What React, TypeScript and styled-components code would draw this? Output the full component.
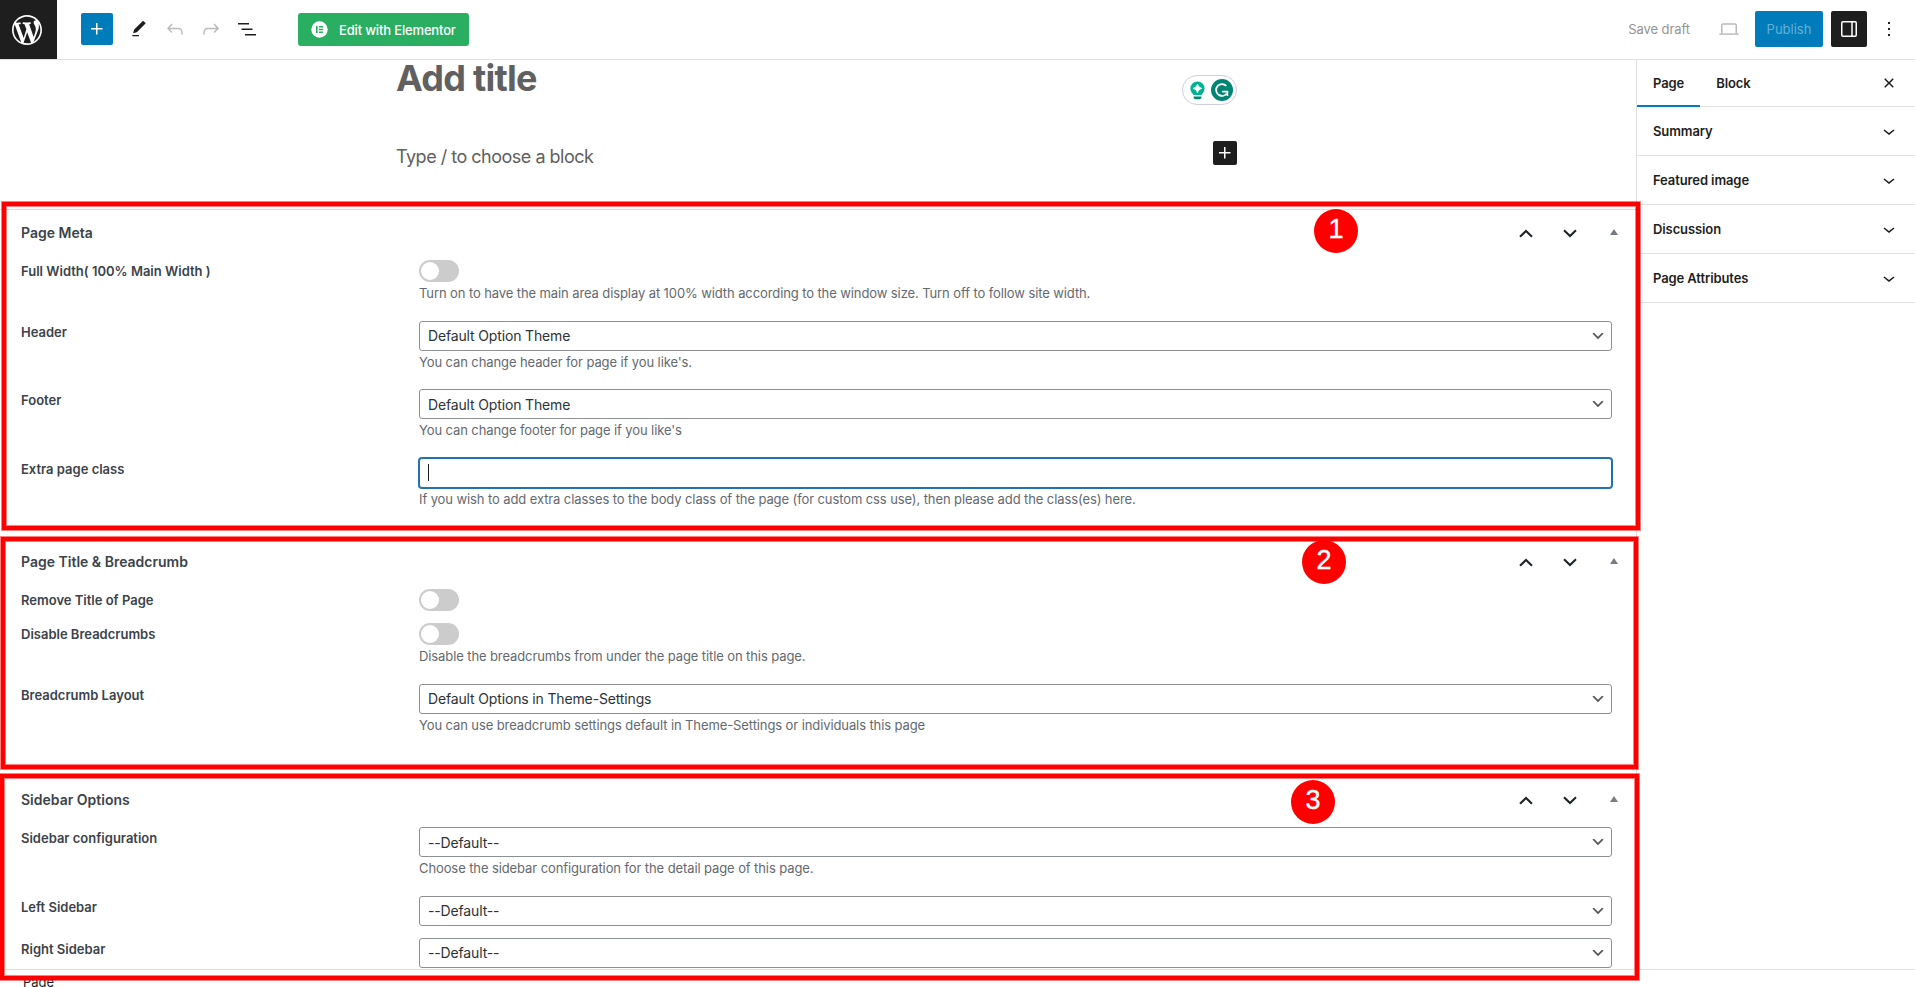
import React from "react";
import styled, { createGlobalStyle, css } from "styled-components";

const Global = createGlobalStyle`
  * { box-sizing: border-box; }
  body {
    margin: 0;
    background: #fff;
    color: #1e1e1e;
    font-family: Inter, "Liberation Sans", sans-serif;
    font-size: 13px;
    -webkit-font-smoothing: antialiased;
  }
`;

const Editor = styled.div`
  position: relative;
  display: flex;
  flex-direction: column;
  width: 1915px;
  height: 987px;
  overflow: hidden;
`;

/* ---------- top bar ---------- */

const TopBar = styled.header`
  flex: none;
  display: flex;
  align-items: center;
  height: 60px;
  border-bottom: 1px solid #e0e0e0;
`;

const SiteLogo = styled.div`
  display: flex;
  align-items: center;
  justify-content: center;
  width: 57px;
  height: 59px;
  padding: 1px 3px 0 0;
  background: #1e1e1e;
`;

const Tools = styled.div`
  display: flex;
  align-items: center;
  margin-left: 24px;
  padding-bottom: 1px;
`;

const InserterButton = styled.button`
  display: flex;
  align-items: center;
  justify-content: center;
  width: 32px;
  height: 32px;
  margin: 0 8px 0 0;
  padding: 0;
  border: 0;
  border-radius: 2px;
  background: #007cba;
  color: #fff;
`;

const ToolButton = styled.button<{ $dim?: boolean }>`
  display: flex;
  align-items: center;
  justify-content: center;
  width: 36px;
  height: 36px;
  padding: 0;
  border: 0;
  background: none;
  color: ${(p) => (p.$dim ? "#bbbbbb" : "#1e1e1e")};
`;

const ElementorButton = styled.button`
  display: flex;
  align-items: center;
  gap: 11px;
  width: 171px;
  height: 33px;
  margin: 0 0 0 33px;
  padding: 0 0 0 13px;
  border: 0;
  border-radius: 3px;
  background: #29ae62;
  color: #fff;
  font: 500 13px/33px Inter, "Liberation Sans", sans-serif;
  letter-spacing: -0.16px;
  white-space: nowrap;
`;

const ElementorLabel = styled.span`
  padding-top: 2px;
`;

const Actions = styled.div`
  display: flex;
  align-items: center;
  margin-left: auto;
  padding: 0 14px 1px 0;
`;

const SaveDraft = styled.span`
  margin-right: 29px;
  color: #949494;
  letter-spacing: -0.08px;
  white-space: nowrap;
`;

const PublishButton = styled.button`
  width: 68px;
  height: 36px;
  margin: 0 8px 0 16px;
  padding: 0;
  border: 0;
  border-radius: 2px;
  background: #007cba;
  color: #66b0d6;
  font: 400 13px/36px Inter, "Liberation Sans", sans-serif;
`;

const SettingsButton = styled.button`
  display: flex;
  align-items: center;
  justify-content: center;
  width: 36px;
  height: 36px;
  margin-right: 10px;
  padding: 0;
  border: 0;
  border-radius: 2px;
  background: #1e1e1e;
  color: #fff;
`;

/* ---------- body ---------- */

const Body = styled.div`
  flex: none;
  display: flex;
  height: 909px;
`;

const Main = styled.main`
  display: flex;
  flex-direction: column;
  width: 1636px;
`;

const Canvas = styled.section`
  flex: none;
  height: 149px;
  padding: 0 399px 0 396px;
`;

const CanvasRow = styled.div`
  display: flex;
  align-items: flex-start;
  justify-content: space-between;
  height: 66px;
  padding-top: 15px;
`;

const PageTitle = styled.h1`
  margin: -17px 0 0;
  color: #606060;
  font-size: 36px;
  font-weight: 700;
  line-height: 40px;
  letter-spacing: -0.75px;
`;

const Prompt = styled.p`
  margin: 3px 0 0;
  color: #606060;
  font-size: 18px;
  line-height: 26px;
  letter-spacing: -0.5px;
`;

const GrammarPill = styled.div`
  display: flex;
  align-items: center;
  justify-content: space-between;
  width: 55px;
  height: 30px;
  padding: 0 3px 0 7px;
  border: 1px solid #cfcfe0;
  border-radius: 15px;
`;

const BlockAdder = styled.button`
  display: flex;
  align-items: center;
  justify-content: center;
  width: 24px;
  height: 24px;
  padding: 0;
  border: 0;
  border-radius: 2px;
  background: #1e1e1e;
  color: #fff;
`;

/* ---------- meta boxes ---------- */

const MetaBoxes = styled.div`
  flex: 1;
  min-height: 0;
  overflow: hidden;
  border-top: 1px solid #ddd;
`;

const MetaBox = styled.section<{ $height: number }>`
  height: ${(p) => p.$height}px;
  padding: 0 24px 0 21px;
`;

const MetaHead = styled.div`
  display: flex;
  align-items: center;
  height: 46px;
  margin-bottom: 3.8px;
`;

const MetaTitle = styled.h2`
  flex: 1;
  margin: 0;
  color: #3c434a;
  font-size: 14px;
  font-weight: 600;
  line-height: 20px;
`;

const OrderIcons = styled.div`
  display: flex;
  align-items: center;
  margin-right: -24px;
  color: #1d2327;
`;

const IconCell = styled.span<{ $width: number }>`
  display: flex;
  justify-content: center;
  width: ${(p) => p.$width}px;
`;

const Row = styled.div`
  display: flex;
  margin-bottom: 12px;
`;

const Label = styled.label`
  flex: none;
  width: 398px;
  height: 22px;
  color: #3c434a;
  font-weight: 600;
  line-height: 23px;
`;

const Field = styled.div`
  flex: 1;
`;

const Toggle = styled.span`
  display: flex;
  width: 40px;
  height: 22px;
  padding: 2px;
  border-radius: 11px;
  background: #ccc;

  &::before {
    content: "";
    width: 18px;
    height: 18px;
    border-radius: 50%;
    background: #fff;
  }
`;

const control = css`
  display: flex;
  align-items: center;
  height: 30px;
  border-radius: 3px;
  background: #fff;
  color: #2c3338;
  font-size: 14px;
  letter-spacing: -0.15px;
`;

const Select = styled.div`
  ${control}
  justify-content: space-between;
  padding: 0 5px 0 8px;
  border: 1px solid #8c8f94;

  svg {
    color: #555;
  }
`;

const TextInput = styled.div`
  ${control}
  padding: 0 8px;
  border: 1px solid #2271b1;
  box-shadow: 0 0 0 1px #2271b1;
`;

const Caret = styled.span`
  width: 1px;
  height: 17px;
  background: #1e1e1e;
`;

const Help = styled.p<{ $toggle: boolean }>`
  margin: ${(p) => (p.$toggle ? "2.4px 0 6.6px" : "2px 0 6.5px")};
  color: #646970;
  line-height: 18px;
  letter-spacing: -0.1px;
  white-space: nowrap;
`;

/* ---------- sidebar ---------- */

const Sidebar = styled.aside`
  flex: 1;
  border-left: 1px solid #e0e0e0;
  font-weight: 600;
  letter-spacing: -0.1px;
`;

const Tabs = styled.div`
  display: flex;
  height: 47px;
  padding-right: 14px;
  border-bottom: 1px solid #e0e0e0;
`;

const Tab = styled.div<{ $active?: boolean }>`
  height: 47px;
  padding: 0 16px;
  line-height: 47px;
  ${(p) => p.$active && "box-shadow: inset 0 -2px 0 #007cba;"}
`;

const CloseButton = styled.span`
  display: flex;
  align-items: center;
  margin-left: auto;
`;

const Panel = styled.div`
  display: flex;
  align-items: center;
  justify-content: space-between;
  height: 49px;
  padding: 0 14px 0 16px;
  border-bottom: 1px solid #e0e0e0;
`;

const Footer = styled.footer`
  flex: none;
  height: 25px;
  padding-left: 23px;
  border-top: 1px solid #e0e0e0;
  line-height: 24px;
`;

/* ---------- annotations laid over the page ---------- */

const Frame = styled.div<{ $x: number; $y: number; $w: number; $h: number }>`
  position: absolute;
  left: ${(p) => p.$x}px;
  top: ${(p) => p.$y}px;
  width: ${(p) => p.$w}px;
  height: ${(p) => p.$h}px;
  border: 4px solid #f00;
  box-shadow: 0 0 0 1px rgba(255, 0, 0, 0.5), inset 0 0 0 1px rgba(255, 0, 0, 0.5);
`;

const Badge = styled.div<{ $x: number; $y: number }>`
  position: absolute;
  left: ${(p) => p.$x}px;
  top: ${(p) => p.$y}px;
  width: 44px;
  height: 44px;
  border-radius: 50%;
  background: #f00;
  color: #fff;
  font: 400 27px/40px "Liberation Sans", sans-serif;
  -webkit-text-stroke: 0.4px #fff;
  text-align: center;
`;

/* ---------- icons ---------- */

const Glyph = ({ d, size = 24, box = "0 0 24 24" }: { d: string; size?: number; box?: string }) => (
  <svg width={size} height={size} viewBox={box} fill="currentColor">
    <path d={d} />
  </svg>
);

const plus = "M11 12.5V17.5H12.5V12.5H17.5V11H12.5V6H11V11H6V12.5H11Z";
const pencil = "M20.1 5.1L16.9 2 6.2 12.7l-1.3 4.4 4.5-1.3L20.1 5.1zM4 20.8h8v-1.5H4v1.5z";
const undo =
  "M18.3 11.7c-.6-.6-1.4-.9-2.3-.9H6.7l2.9-3.3-1.1-1-4.5 5L8.5 16l1-1-2.7-2.7H16c.5 0 .9.2 1.3.5 1 1 1 3.4 1 4.5v.3h1.5v-.2c0-1.5 0-4.3-1.5-5.7z";
const redo =
  "M15.6 6.5l-1.1 1 2.9 3.3H8c-.9 0-1.7.3-2.3.9-1.4 1.5-1.4 4.2-1.4 5.6v.2h1.5v-.3c0-1.1 0-3.5 1-4.5.3-.3.7-.5 1.3-.5h9.2L14.5 15l1.1 1.1 4.6-4.6-4.6-5z";
const listView = "M3 6h11v1.5H3V6zm3.5 5.5h11V13h-11v-1.5zM21 17H10v1.5h11V17z";
const dots = "M13 19h-2v-2h2v2zm0-6h-2v-2h2v2zm0-6h-2V5h2v2z";
const chevron = "M17.5 11.6L12 16l-5.5-4.4.9-1.2L12 14l4.5-3.6 1 1.2z";
const cross =
  "M12 13.06l3.712 3.713 1.061-1.06L13.061 12l3.712-3.712-1.06-1.06L12 10.938 8.288 7.227l-1.061 1.06L10.939 12l-3.712 3.712 1.06 1.061L12 13.061z";
const wordpress =
  "M20 10c0-5.51-4.49-10-10-10C4.48 0 0 4.49 0 10c0 5.52 4.48 10 10 10 5.51 0 10-4.48 10-10zM7.78 15.37L4.37 6.22c.55-.02 1.17-.08 1.17-.08.5-.06.44-1.13-.06-1.11 0 0-1.45.11-2.37.11-.18 0-.37 0-.58-.01C4.12 2.69 6.87 1.11 10 1.11c2.33 0 4.45.87 6.05 2.34-.68-.11-1.65.39-1.65 1.58 0 .74.45 1.36.9 2.1.35.61.55 1.36.55 2.46 0 1.49-1.4 5-1.4 5l-3.03-8.37c.54-.02.82-.17.82-.17.5-.05.44-1.25-.06-1.22 0 0-1.44.12-2.38.12-.87 0-2.33-.12-2.33-.12-.5-.03-.56 1.2-.06 1.22l.92.08 1.26 3.41zM17.41 10c.24-.64.74-1.87.43-4.25.7 1.29 1.05 2.71 1.05 4.25 0 3.29-1.73 6.24-4.4 7.78.97-2.59 1.94-5.2 2.92-7.78zM6.1 18.09C3.12 16.65 1.11 13.53 1.11 10c0-1.3.23-2.48.72-3.59C3.25 10.3 4.67 14.2 6.1 18.09zm4.03-6.63l2.58 6.98c-.86.29-1.76.45-2.71.45-.79 0-1.57-.11-2.29-.33.81-2.38 1.62-4.74 2.42-7.1z";

const ElementorMark = () => (
  <svg width="17" height="17" viewBox="0 0 17 17">
    <circle cx="8.5" cy="8.5" r="8.2" fill="#fff" />
    <path d="M5 5h1.6v7H5zM8 5h4.2v1.4H8zM8 7.8h4.2v1.4H8zM8 10.6h4.2V12H8z" fill="#29ae62" />
  </svg>
);

const Laptop = () => (
  <svg width="20" height="12" viewBox="0 0 20 12" fill="none" stroke="#bbb" strokeWidth="1.5">
    <path d="M2.75 10.5V2.2c0-.8.5-1.3 1.3-1.3h11.9c.8 0 1.3.5 1.3 1.3v8.3" />
    <path d="M.3 11.1h19.4" />
  </svg>
);

const SidebarMark = () => (
  <svg width="16" height="16" viewBox="0 0 16 16" fill="none" stroke="currentColor" strokeWidth="1.5">
    <rect x=".75" y=".75" width="14.5" height="14.5" rx="1.2" />
    <path d="M11 .75v14.5" />
  </svg>
);

const Bulb = () => (
  <svg width="15" height="19" viewBox="0 0 15 19">
    <path
      d="M7.5.4a7 7 0 0 1 7.1 7c0 2.7-1.5 4.2-3.3 6.6H3.7C1.9 11.6.4 10.1.4 7.4a7 7 0 0 1 7.1-7z"
      fill="#00b294"
    />
    <path d="M7.5 3.1Q8.2 6.7 11.8 7.4 8.2 8.1 7.5 11.7 6.8 8.1 3.2 7.4 6.8 6.7 7.5 3.1z" fill="#fff" stroke="#fff" strokeWidth=".8" />
    <path d="M3.5 15.4h8c0 1.9-.9 2.8-2.4 2.8H5.9c-1.5 0-2.4-.9-2.4-2.8z" fill="#008573" />
  </svg>
);

const Grammarly = () => (
  <svg width="22" height="22" viewBox="0 0 22 22">
    <circle cx="11" cy="11" r="11" fill="#008573" />
    <path d="M15.3 6.9A5.9 5.9 0 1 0 15.8 14.4" fill="none" stroke="#fff" strokeWidth="1.7" />
    <path d="M11.2 12.6h5.2v4.4" fill="none" stroke="#fff" strokeWidth="1.7" />
  </svg>
);

const Arrow = ({ up }: { up?: boolean }) => (
  <svg width="14" height="9" viewBox="0 0 14 9" fill="none" stroke="currentColor" strokeWidth="2.1">
    <path d={up ? "M1 7.7L7 2l6 5.7" : "M1 1.3L7 7l6-5.7"} />
  </svg>
);

const Triangle = () => (
  <svg width="8" height="8" viewBox="0 0 8 8">
    <path d="M4 0l4 6H0z" fill="#787c82" />
  </svg>
);

/* ---------- composition ---------- */

type Item = { label: string; kind: "toggle" | "select" | "input"; value?: string; help?: string };

const boxes: { title: string; height: number; items: Item[] }[] = [
  {
    title: "Page Meta",
    height: 329,
    items: [
      {
        label: "Full Width( 100% Main Width )",
        kind: "toggle",
        help: "Turn on to have the main area display at 100% width according to the window size. Turn off to follow site width.",
      },
      { label: "Header", kind: "select", value: "Default Option Theme", help: "You can change header for page if you like's." },
      { label: "Footer", kind: "select", value: "Default Option Theme", help: "You can change footer for page if you like's" },
      {
        label: "Extra page class",
        kind: "input",
        help: "If you wish to add extra classes to the body class of the page (for custom css use), then please add the class(es) here.",
      },
    ],
  },
  {
    title: "Page Title & Breadcrumb",
    height: 238.3,
    items: [
      { label: "Remove Title of Page", kind: "toggle" },
      { label: "Disable Breadcrumbs", kind: "toggle", help: "Disable the breadcrumbs from under the page title on this page." },
      {
        label: "Breadcrumb Layout",
        kind: "select",
        value: "Default Options in Theme-Settings",
        help: "You can use breadcrumb settings default in Theme-Settings or individuals this page",
      },
    ],
  },
  {
    title: "Sidebar Options",
    height: 220,
    items: [
      {
        label: "Sidebar configuration",
        kind: "select",
        value: "--Default--",
        help: "Choose the sidebar configuration for the detail page of this page.",
      },
      { label: "Left Sidebar", kind: "select", value: "--Default--" },
      { label: "Right Sidebar", kind: "select", value: "--Default--" },
    ],
  },
];

const FieldRow = ({ item }: { item: Item }) => (
  <Row>
    <Label>{item.label}</Label>
    <Field>
      {item.kind === "toggle" && <Toggle />}
      {item.kind === "select" && (
        <Select>
          {item.value}
          <Glyph d="M5 6l5 5 5-5 2 1-7 7-7-7 2-1z" size={16} box="0 0 20 20" />
        </Select>
      )}
      {item.kind === "input" && (
        <TextInput>
          <Caret />
        </TextInput>
      )}
      {item.help && <Help $toggle={item.kind === "toggle"}>{item.help}</Help>}
    </Field>
  </Row>
);

export default function App() {
  return (
    <Editor>
      <Global />
      <TopBar>
        <SiteLogo>
          <svg width="30" height="30" viewBox="0 0 20 20" fill="#fff">
            <path d={wordpress} />
          </svg>
        </SiteLogo>
        <Tools>
          <InserterButton>
            <Glyph d={plus} />
          </InserterButton>
          <ToolButton>
            <Glyph d={pencil} size={20} />
          </ToolButton>
          <ToolButton $dim>
            <Glyph d={undo} />
          </ToolButton>
          <ToolButton $dim>
            <Glyph d={redo} />
          </ToolButton>
          <ToolButton>
            <Glyph d={listView} />
          </ToolButton>
          <ElementorButton>
            <ElementorMark />
            <ElementorLabel>Edit with Elementor</ElementorLabel>
          </ElementorButton>
        </Tools>
        <Actions>
          <SaveDraft>Save draft</SaveDraft>
          <Laptop />
          <PublishButton>Publish</PublishButton>
          <SettingsButton>
            <SidebarMark />
          </SettingsButton>
          <Glyph d={dots} />
        </Actions>
      </TopBar>

      <Body>
        <Main>
          <Canvas>
            <CanvasRow>
              <PageTitle>Add title</PageTitle>
              <GrammarPill>
                <Bulb />
                <Grammarly />
              </GrammarPill>
            </CanvasRow>
            <CanvasRow>
              <Prompt>Type / to choose a block</Prompt>
              <BlockAdder>
                <Glyph d={plus} />
              </BlockAdder>
            </CanvasRow>
          </Canvas>
          <MetaBoxes>
            {boxes.map((box) => (
              <MetaBox key={box.title} $height={box.height}>
                <MetaHead>
                  <MetaTitle>{box.title}</MetaTitle>
                  <OrderIcons>
                    <IconCell $width={44}>
                      <Arrow up />
                    </IconCell>
                    <IconCell $width={44}>
                      <Arrow />
                    </IconCell>
                    <IconCell $width={44}>
                      <Triangle />
                    </IconCell>
                  </OrderIcons>
                </MetaHead>
                {box.items.map((item) => (
                  <FieldRow key={item.label} item={item} />
                ))}
              </MetaBox>
            ))}
          </MetaBoxes>
        </Main>
        <Sidebar>
          <Tabs>
            <Tab $active>Page</Tab>
            <Tab>Block</Tab>
            <CloseButton>
              <Glyph d={cross} />
            </CloseButton>
          </Tabs>
          {["Summary", "Featured image", "Discussion", "Page Attributes"].map((name) => (
            <Panel key={name}>
              {name}
              <Glyph d={chevron} />
            </Panel>
          ))}
        </Sidebar>
      </Body>
      <Footer>Page</Footer>

      <Frame $x={2} $y={202} $w={1638} $h={328} />
      <Frame $x={1} $y={537} $w={1637} $h={232} />
      <Frame $x={0} $y={774} $w={1639} $h={206} />
      <Badge $x={1314} $y={209}>1</Badge>
      <Badge $x={1302} $y={540}>2</Badge>
      <Badge $x={1291} $y={780}>3</Badge>
    </Editor>
  );
}
